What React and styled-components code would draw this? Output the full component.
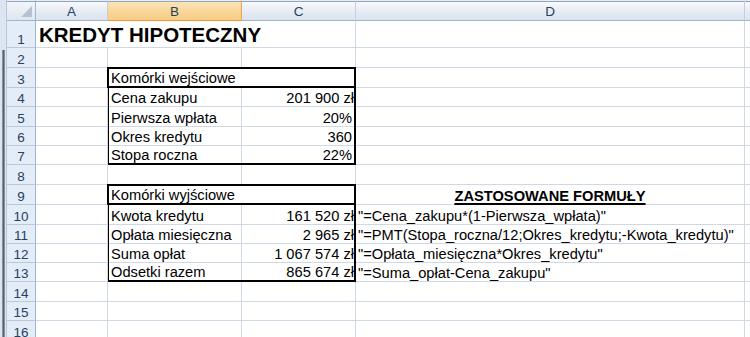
import React from 'react';
import styled, { createGlobalStyle } from 'styled-components';

const GRID = '#d0d7e5';
const HEAD_LINE = '#9eb6ce';

// sheet row heights (rows 1..16), header row is 21px
const ROWS = [27, 20, 20, 19, 20, 19, 19, 20, 20, 20, 19, 19, 19, 20, 19, 20];

// E is only a sliver at the right edge, its letter is off screen
const COLUMNS = [
  { key: 'A', label: 'A' },
  { key: 'B', label: 'B', active: true },
  { key: 'C', label: 'C' },
  { key: 'D', label: 'D' },
  { key: 'E', label: '' },
];

const inputs = {
  title: 'Komórki wejściowe',
  rows: [
    ['Cena zakupu', '201 900 zł', true],
    ['Pierwsza wpłata', '20%'],
    ['Okres kredytu', '360'],
    ['Stopa roczna', '22%'],
  ],
};

const outputs = {
  title: 'Komórki wyjściowe',
  rows: [
    ['Kwota kredytu', '161 520 zł', true],
    ['Opłata miesięczna', '2 965 zł', true],
    ['Suma opłat', '1 067 574 zł', true],
    ['Odsetki razem', '865 674 zł', true],
  ],
};

const formulas = [
  '"=Cena_zakupu*(1-Pierwsza_wpłata)"',
  '"=PMT(Stopa_roczna/12;Okres_kredytu;-Kwota_kredytu)"',
  '"=Opłata_miesięczna*Okres_kredytu"',
  '"=Suma_opłat-Cena_zakupu"',
];

const GlobalStyle = createGlobalStyle`
  html, body {
    margin: 0;
    padding: 0;
    background: #fff;
    overflow: hidden;
  }
`;

const Window = styled.div`
  width: 750px;
  height: 337px;
  overflow: hidden;
  background: #fff;
`;

const Sheet = styled.div`
  display: grid;
  grid-template-columns: 7px 29px 72px 134px 114px 389px 60px;
  grid-template-rows: 21px ${ROWS.map((h) => h + 'px').join(' ')};
  font-family: "Liberation Sans", Arial, sans-serif;
  font-size: 14.67px;
  line-height: normal;
  color: #000;
`;

const Edge = styled.div`
  grid-column: 1;
  grid-row: 1 / -1;
  display: flex;
  flex-direction: column;
  padding: 50px 1px 0 2px;
  background: #dce6f2;
  border-right: 1px solid #b7c6da;
`;

const EdgeBar = styled.div`
  flex: 1;
  background: linear-gradient(to right, #9aa3ae, #5d646e 50%, #98a1ad);
`;

const Corner = styled.div`
  display: flex;
  align-items: flex-end;
  justify-content: flex-end;
  padding: 0 3px 3px 0;
  background: linear-gradient(#f3f6fa, #dfe6f0);
  border-top: 1px solid #e9eef5;
  box-shadow: inset 0 1px 0 #8fa5c1;
  border-right: 1px solid ${HEAD_LINE};
  border-bottom: 1px solid ${HEAD_LINE};
`;

const ColHead = styled.div`
  display: flex;
  align-items: center;
  justify-content: center;
  padding-top: 1px;
  font-size: 13.5px;
  color: #27415f;
  border-top: 1px solid #e9eef5;
  box-shadow: inset 0 1px 0 #8fa5c1;
  border-right: 1px solid ${(p) => (p.$active ? '#f1a447' : '#c3cfdd')};
  border-bottom: 1px solid ${(p) => (p.$active ? '#f29536' : HEAD_LINE)};
  background: ${(p) =>
    p.$active
      ? 'linear-gradient(#fce6bd, #f9d699 55%, #f8cd85)'
      : 'linear-gradient(#f9fbfd, #e7ecf4 55%, #dbe3ee)'};
`;

const RowHead = styled.div`
  display: flex;
  align-items: flex-end;
  justify-content: center;
  font-size: 13.5px;
  color: #27415f;
  background: #e4ecf7;
  border-right: 1px solid ${HEAD_LINE};
  border-bottom: 1px solid #b9c9dd;
`;

const Cell = styled.div`
  grid-column: span ${(p) => p.$span || 1};
  display: flex;
  align-items: flex-end;
  justify-content: ${(p) => (p.$center ? 'center' : 'flex-start')};
  padding: 0 2px;
  white-space: nowrap;
  min-width: 0;
  border-right: 1px solid ${GRID};
  border-bottom: 1px solid ${GRID};
`;

const TitleCell = styled(Cell)`
  padding-left: 3px;
  font-size: 20.5px;
  font-weight: bold;
`;

const Heading = styled.span`
  font-weight: bold;
  text-decoration: underline;
  text-decoration-thickness: 2px;
  text-underline-offset: 2px;
`;

const Table = styled.div`
  grid-column: span 2;
  grid-row: span 5;
  margin: -1px 0 0 -1px;
  display: grid;
  grid-template-columns: 133px 1fr;
  grid-template-rows: ${(p) => p.$rows};
  border: 2px solid #000;
  overflow: hidden;
  background: #fff;
  white-space: nowrap;
`;

const TableTitle = styled.div`
  grid-column: 1 / -1;
  display: flex;
  align-items: flex-end;
  padding: 0 2px;
  border-bottom: 2px solid #000;
`;

const TableCell = styled.div`
  display: flex;
  align-items: flex-end;
  justify-content: ${(p) => (p.$value ? 'flex-end' : 'flex-start')};
  padding: 0 2px;
  border-right: ${(p) => (p.$value ? 'none' : `1px solid ${GRID}`)};
  border-bottom: ${(p) => (p.$last ? 'none' : `1px solid ${GRID}`)};
`;

// currency values run a pixel or two under the thick right border
const Value = styled.span`
  margin-right: ${(p) => (p.$currency ? '-2px' : '0')};
`;

function CornerMark() {
  return (
    <svg width="11" height="11" viewBox="0 0 11 11">
      <polygon points="11,0 11,11 0,11" fill="#b5c1d0" />
    </svg>
  );
}

function DataTable({ table, from }) {
  const h = ROWS.slice(from - 1, from + 4);
  const rows = [h[0] - 1, h[1], h[2], h[3], h[4] - 2].map((v) => v + 'px').join(' ');
  return (
    <Table $rows={rows}>
      <TableTitle>{table.title}</TableTitle>
      {table.rows.map(([label, value, currency], i) => {
        const last = i === table.rows.length - 1;
        return (
          <React.Fragment key={label}>
            <TableCell $last={last}>{label}</TableCell>
            <TableCell $value $last={last}>
              <Value $currency={currency}>{value}</Value>
            </TableCell>
          </React.Fragment>
        );
      })}
    </Table>
  );
}

export default function App() {
  const cells = [];
  for (let r = 1; r <= 16; r++) {
    cells.push(<RowHead key={'h' + r}>{r}</RowHead>);
    if (r === 1) {
      cells.push(
        <TitleCell key="title" $span={3}>
          KREDYT HIPOTECZNY
        </TitleCell>
      );
    } else {
      cells.push(<Cell key={'a' + r} />);
      if (r === 3) cells.push(<DataTable key="in" table={inputs} from={3} />);
      else if (r === 9) cells.push(<DataTable key="out" table={outputs} from={9} />);
      else if (!(r >= 4 && r <= 7) && !(r >= 10 && r <= 13)) {
        cells.push(<Cell key={'b' + r} />, <Cell key={'c' + r} />);
      }
    }
    if (r === 9) {
      cells.push(
        <Cell key="d9" $center>
          <Heading>ZASTOSOWANE FORMUŁY</Heading>
        </Cell>
      );
    } else if (r >= 10 && r <= 13) {
      cells.push(<Cell key={'d' + r}>{formulas[r - 10]}</Cell>);
    } else {
      cells.push(<Cell key={'d' + r} />);
    }
    cells.push(<Cell key={'e' + r} />);
  }

  return (
    <Window>
      <GlobalStyle />
      <Sheet>
        <Edge>
          <EdgeBar />
        </Edge>
        <Corner>
          <CornerMark />
        </Corner>
        {COLUMNS.map((c) => (
          <ColHead key={c.key} $active={c.active}>
            {c.label}
          </ColHead>
        ))}
        {cells}
      </Sheet>
    </Window>
  );
}
